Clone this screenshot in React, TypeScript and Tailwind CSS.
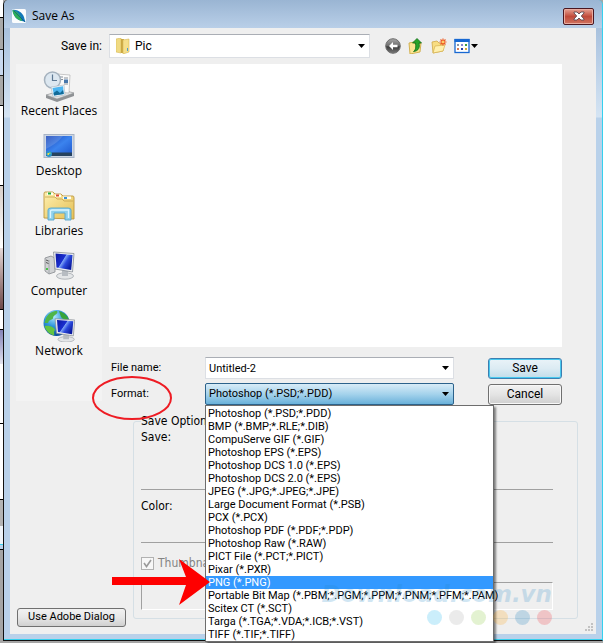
import React from 'react';

const formats = [
  'Photoshop (*.PSD;*.PDD)',
  'BMP (*.BMP;*.RLE;*.DIB)',
  'CompuServe GIF (*.GIF)',
  'Photoshop EPS (*.EPS)',
  'Photoshop DCS 1.0 (*.EPS)',
  'Photoshop DCS 2.0 (*.EPS)',
  'JPEG (*.JPG;*.JPEG;*.JPE)',
  'Large Document Format (*.PSB)',
  'PCX (*.PCX)',
  'Photoshop PDF (*.PDF;*.PDP)',
  'Photoshop Raw (*.RAW)',
  'PICT File (*.PCT;*.PICT)',
  'Pixar (*.PXR)',
  'PNG (*.PNG)',
  'Portable Bit Map (*.PBM;*.PGM;*.PPM;*.PNM;*.PFM;*.PAM)',
  'Scitex CT (*.SCT)',
  'Targa (*.TGA;*.VDA;*.ICB;*.VST)',
  'TIFF (*.TIF;*.TIFF)',
];

const Arrow = ({ className = '' }: { className?: string }) => (
  <svg viewBox="0 0 7 4" className={`pointer-events-none h-1 w-[7px] shrink-0 ${className}`}>
    <path d="M0 0H7L3.5 4Z" fill="#000" />
  </svg>
);

const Monitor = ({ id }: { id: string }) => (
  <g>
    <defs>
      <linearGradient id={id} x1="0" y1="0" x2="1" y2="0.6">
        <stop offset="0" stopColor="#0c16a0" />
        <stop offset="0.48" stopColor="#1a2fd0" />
        <stop offset="0.52" stopColor="#7ea4f5" />
        <stop offset="0.7" stopColor="#2b49dc" />
        <stop offset="1" stopColor="#0a1aa0" />
      </linearGradient>
    </defs>
    <ellipse cx="22" cy="26" rx="8.5" ry="3.2" fill="#e4e6e8" stroke="#9a9fa5" strokeWidth="0.7" />
    <path d="M19 20L25 21L25 26L19 26Z" fill="#b7bcc2" />
    <path d="M10.500 2L31 3.500L29.500 22L12 19Z" fill="#eceef0" stroke="#888e96" strokeWidth="0.8" />
    <path d="M12.500 3.600L29.500 5L28.200 20L13.500 17.500Z" fill={`url(#${id})`} />
  </g>
);

const RecentIcon = () => (
  <svg viewBox="0 0 32 32" className="size-8">
    <path d="M3 25L20 20L31 23L31 26L14 32L3 28Z" fill="#8f9295" />
    <path d="M3 25L20 20L31 23L14 29Z" fill="#e3e4e5" stroke="#909396" strokeWidth="0.6" />
    <path d="M14 4L27 5L26 23L14 22Z" fill="#fafafa" stroke="#a8a8a8" strokeWidth="0.6" />
    <path d="M16 7H20M16 9.500H20M21 8H25M21 14H25" stroke="#889099" />
    <path d="M21 9.500H25V13H21Z" fill="#4777ac" />
    <circle cx="9.500" cy="10" r="8" fill="#dce7f0" stroke="#a5b2be" strokeWidth="1.5" />
    <path d="M9.500 4.500V10.500H14" fill="none" stroke="#5d7893" strokeWidth="1.2" />
    <path d="M8 17L21 15L22 25L10 27Z" fill="#eef6fb" stroke="#a9b6bf" strokeWidth="0.6" />
    <path d="M9.500 18L20 16.300L20.800 24L11 25.500Z" fill="#4db5f0" />
    <path d="M10.500 23L14 20.500L17 23L20 20L20.800 24L11 25.500Z" fill="#126b98" />
  </svg>
);

const DesktopIcon = () => (
  <svg viewBox="0 0 32 32" className="size-8">
    <defs>
      <linearGradient id="desk" x1="0" y1="0" x2="1" y2="1">
        <stop offset="0" stopColor="#1a44b8" />
        <stop offset="0.5" stopColor="#3b83ee" />
        <stop offset="1" stopColor="#1c55cc" />
      </linearGradient>
    </defs>
    <rect x="1" y="4.500" width="30" height="23" fill="#ccd6e4" stroke="#a8b4c6" />
    <rect x="3" y="6" width="26" height="20" fill="url(#desk)" />
    <path d="M3 6H20C15 12 9 16 3 19Z" fill="#fff" opacity="0.15" />
    <rect x="3" y="22.500" width="26" height="3.500" fill="#26425f" />
    <circle cx="6" cy="24" r="3" fill="#2a96c9" />
    <path d="M4.500 23H6V25H4.500Z" fill="#e8d84b" />
    <path d="M6 22.500H7.500V24H6Z" fill="#8cd46c" />
  </svg>
);

const LibrariesIcon = () => (
  <svg viewBox="0 0 32 32" className="size-8">
    <defs>
      <linearGradient id="lib" x1="0" y1="0" x2="1" y2="1">
        <stop offset="0" stopColor="#fff0b0" />
        <stop offset="1" stopColor="#e3bf55" />
      </linearGradient>
    </defs>
    <path d="M1 28V4Q1 2 2 2H10L12 4H18L20 6H30Q31 6 31 8V29Z" fill="url(#lib)" stroke="#bd973e" strokeWidth="0.9" />
    <path d="M4 2.500H10V5H4Z M12 4.500H18V7H12Z M20 6.500H28V9H20Z" fill="#fffdf3" />
    <path d="M5 2.500H8V4.500H5Z" fill="#23a93d" />
    <path d="M13 4.500H16V6.500H13Z" fill="#d94932" />
    <path d="M21 7H24V9H21Z" fill="#3a91d8" />
    <path d="M2 7H12L14 9H19L21 11H30" fill="none" stroke="#c5a14e" strokeWidth="0.8" />
    <path d="M5 30V20Q5 18 8 18H25Q28 18 28 20V30H22V23H11V30Z" fill="#8fd1ec" stroke="#57a5cb" strokeWidth="0.9" />
    <path d="M7.500 28V21Q7.500 20 9 20H25.500V28" fill="none" stroke="#dcf5ff" strokeWidth="1.3" />
  </svg>
);

const ComputerIcon = () => (
  <svg viewBox="0 0 32 32" className="size-8">
    <path d="M2 8L8 6L12 8V22L6 24L2 21Z" fill="#d0d2d4" stroke="#85898e" strokeWidth="0.8" />
    <path d="M6 10V24" stroke="#9b9fa3" strokeWidth="0.8" />
    <path d="M3 10L5.500 11M3 12.500L5.500 13.500" stroke="#555" />
    <path d="M3 18H5V20H3Z" fill="#4cc14a" />
    <Monitor id="pc" />
  </svg>
);

const NetworkIcon = () => (
  <svg viewBox="0 0 32 32" className="size-8">
    <defs>
      <radialGradient id="globe" cx="0.4" cy="0.25" r="0.75">
        <stop offset="0" stopColor="#b4eaff" />
        <stop offset="0.5" stopColor="#2d94dc" />
        <stop offset="1" stopColor="#0b4c9a" />
      </radialGradient>
    </defs>
    <circle cx="13.500" cy="13" r="13" fill="url(#globe)" />
    <path d="M3 8C6 3 9 1 14 1C16 4 10 5 10 8C10 10 6 9 5 13L1.500 13Z" fill="#4fb548" />
    <path d="M16 1C22 3 25 6 26 11L21 10L18 7Z" fill="#38a53a" />
    <path d="M1.500 16C7 15 12 18 12 20C10 22 12 24 11 25.500C6 24 3 21 1.500 16Z" fill="#63c442" />
    <g transform="translate(2 7) scale(0.96 0.86)">
      <Monitor id="net" />
    </g>
  </svg>
);

const places = [
  { name: 'Recent Places', icon: <RecentIcon /> },
  { name: 'Desktop', icon: <DesktopIcon /> },
  { name: 'Libraries', icon: <LibrariesIcon /> },
  { name: 'Computer', icon: <ComputerIcon /> },
  { name: 'Network', icon: <NetworkIcon /> },
];

// Sliver of the application window behind the dialog
const BackgroundEdge = () => (
  <div className="flex w-[3px] shrink-0 flex-col bg-white">
    <div className="h-[18px] border-b border-black" />
    <div className="h-[31px] bg-[#a9a9a9]" />
    <div className="h-[27px] border-y border-[#222] bg-[#c9d9ef]" />
    <div className="h-[30px] border-b border-black bg-[#a9a9a9]" />
    <div className="h-20 border-b border-black" />
    <div className="h-[62px] bg-linear-to-b from-[#d8d0ca] to-white" />
    <div className="h-[62px] border-b border-black bg-linear-to-b from-[#e5dada] to-[#6e4a4a]" />
    <div className="h-5 border-b border-black" />
    <div className="h-[34px] bg-linear-to-b from-[#8583b8] to-[#e4e4ee]" />
    <div className="h-[60px] border-b border-black" />
    <div className="h-[76px] border-b border-black" />
    <div className="h-[26px] bg-[#b4b4b4]" />
    <div className="h-[18px] bg-[#eef3f8]" />
    <div className="h-[6px] border-y border-t-[#35d0ee] border-b-black bg-[#b9d1ea]" />
    <div className="flex-1 bg-[#a5a5a5]" />
  </div>
);

const TitleBar = () => (
  <header className="flex h-7 items-center rounded-t-[5px] bg-linear-to-b from-[#9ab5d3] to-[#b9cfe8] pt-1 pr-2 pl-2">
    <svg viewBox="0 0 14 14" className="size-[14px]">
      <rect width="14" height="14" rx="1.500" fill="#fafcfd" />
      <path d="M0.500 1C6 0 12 5 12.500 10L13.500 13L10 12C5 11 1 7 0.500 1Z" fill="#1278b8" />
      <path d="M0.500 1C5 2 9 6 10 12C5 11 1 7 0.500 1Z" fill="#2fae57" />
      <path d="M2 2L13 13" stroke="#084e86" strokeWidth="0.7" />
    </svg>
    <h1 className="ml-[6px] flex-1 font-['Open_Sans','Noto_Sans',sans-serif] text-[12px] leading-4">Save As</h1>
    <button
      aria-label="Close"
      className="flex h-[17px] w-[31px] items-center justify-center rounded-[2px] border border-[#4a1720] bg-linear-to-b from-[#e5a193] via-[#c04a3a] via-50% to-[#cf7361] shadow-[inset_0_0_0_1px_#e9aca0]"
    >
      <svg viewBox="0 0 12 10" className="h-[10px] w-3">
        <path
          d="M1 1H4L6 3L8 1H11V2L8.300 5L11 8V9H8L6 7L4 9H1V8L3.700 5L1 2Z"
          fill="#fff"
          stroke="#5b4a50"
          strokeWidth="0.9"
        />
      </svg>
    </button>
  </header>
);

const Toolbar = () => (
  <div className="flex h-9 items-center">
    <label htmlFor="folder" className="w-[99px] shrink-0 pr-[7px] text-right text-[12px]">
      Save in:
    </label>
    <div className="relative flex h-6 w-[261px] items-center border border-[#dcdfe4] border-t-[#aaaeb5] bg-white">
      <svg viewBox="0 0 14 16" className="pointer-events-none absolute left-[6px] h-4 w-[14px]">
        <path d="M0 1L5 0V15L0 14Z" fill="#f0da82" stroke="#d6b855" strokeWidth="0.6" />
        <path d="M5 1H8V15H5Z" fill="#caa742" />
        <path d="M7 2L13 1V14L7 16Z" fill="#f5df8b" stroke="#d6b855" strokeWidth="0.6" />
        <path d="M11 10H12V13H11Z" fill="#4d9ed0" />
      </svg>
      <select id="folder" className="h-full w-full appearance-none bg-transparent pl-[25px] text-[12px] outline-none">
        <option>Pic</option>
      </select>
      <Arrow className="absolute right-1" />
    </div>
    <div className="flex items-center gap-[7px] pl-[15px]">
      <button aria-label="Back">
        <svg viewBox="0 0 16 16" className="size-4">
          <defs>
            <linearGradient id="back" x1="0" y1="0" x2="0" y2="1">
              <stop offset="0" stopColor="#a8a8a8" />
              <stop offset="0.5" stopColor="#6b6b6b" />
              <stop offset="0.55" stopColor="#3c3c3c" />
              <stop offset="1" stopColor="#7a7a7a" />
            </linearGradient>
          </defs>
          <circle cx="8" cy="8" r="7.300" fill="url(#back)" stroke="#6e6e6e" />
          <path d="M8 4L4 8L8 12V9.300H12.500V6.700H8Z" fill="#fff" />
        </svg>
      </button>
      <button aria-label="Up one level">
        <svg viewBox="0 0 16 16" className="size-4">
          <path d="M1 5L6 4L7 6L13 5L12 14L2 16Z" fill="#fbe592" stroke="#ceaa45" strokeWidth="0.9" />
          <path
            d="M5.500 13.500C8 12 8 9 7.500 5H4.500L9 0.500L13.500 5H11C12 9 11 13 5.500 13.500Z"
            fill="#28a329"
            stroke="#126c18"
            strokeWidth="0.8"
          />
        </svg>
      </button>
      <button aria-label="New folder">
        <svg viewBox="0 0 16 16" className="size-4">
          <path d="M1 4L6 3L8 5L12 6V13L2 15Z" fill="#f8dd82" stroke="#cfa847" strokeWidth="0.8" />
          <path d="M2 15L4 8L14 7L12 13Z" fill="#fff0ae" stroke="#d6b24f" strokeWidth="0.7" />
          <path d="M12 0.500V7.500M8.500 4H15.500M9.500 1.500L14.500 6.500M14.500 1.500L9.500 6.500" stroke="#ed5b22" strokeWidth="1.2" />
          <circle cx="12" cy="4" r="1.300" fill="#ffcf66" />
        </svg>
      </button>
      <button aria-label="View menu" className="flex items-center gap-[1px]">
        <svg viewBox="0 0 16 16" className="size-4">
          <rect x="1" y="1.500" width="14" height="13" fill="#fff" stroke="#1768d2" strokeWidth="1.3" />
          <path d="M0.500 1H15.500V4H0.500Z" fill="#1768d2" />
          <path d="M3 6H5V8H3Z" fill="#8a94a8" />
          <path d="M7 6H9V8H7Z" fill="#8a86d0" />
          <path d="M3 10H5V12H3Z" fill="#d77a55" />
          <path d="M11 6H13V8H11Z" fill="#3c9d42" />
          <path d="M7 10H9V12H7Z" fill="#283fa8" />
          <path d="M11 10H13V12H11Z" fill="#d7aa34" />
        </svg>
        <Arrow />
      </button>
    </div>
  </div>
);

const FormatList = () => (
  <ul
    role="listbox"
    aria-label="Format"
    className="absolute top-full left-0 z-10 w-[289px] border border-[#6d6d6d] bg-white pt-px shadow-[2px_2px_2px_#0007]"
  >
    {formats.map((format) => (
      <li
        key={format}
        role="option"
        aria-selected={format.startsWith('PNG')}
        className={`h-[13px] pl-[2px] text-[11px] leading-[13px] whitespace-nowrap ${
          format.startsWith('PNG') ? 'bg-[#3399ff] text-white' : ''
        }`}
      >
        {format}
      </li>
    ))}
  </ul>
);

const Fields = () => (
  <form className="mt-[10px] mr-[34px] flex flex-col gap-1">
    <div className="flex items-center">
      <label htmlFor="filename" className="w-24 shrink-0 pl-[2px] text-[11px]">
        File name:
      </label>
      <div className="relative flex h-[22px] w-[249px] items-center">
        <input
          id="filename"
          defaultValue="Untitled-2"
          className="h-full w-full border border-[#dcdfe4] border-t-[#aaaeb5] bg-white pl-[3px] text-[11px] outline-none"
        />
        <Arrow className="absolute right-[5px]" />
      </div>
      <button
        type="button"
        className="ml-auto h-[21px] w-[74px] rounded-[3px] border border-[#3c7fb1] bg-linear-to-b from-[#eaf3f8] via-[#dcebf3] via-50% to-[#c1dce9] text-[12px] shadow-[inset_0_0_0_1px_#48c8ef]"
      >
        Save
      </button>
    </div>
    <div className="flex items-center">
      <label htmlFor="format" className="w-24 shrink-0 pl-[2px] text-[11px]">
        Format:
      </label>
      <div className="relative flex h-[22px] w-[249px] items-center">
        <select
          id="format"
          className="h-full w-full appearance-none rounded-[2px] border border-[#2c628b] bg-linear-to-b from-[#d8ecf7] via-[#a5d3ec] via-50% to-[#69b1da] pl-[3px] text-[11px] outline-none"
        >
          {formats.map((format) => (
            <option key={format}>{format}</option>
          ))}
        </select>
        <Arrow className="absolute right-[5px]" />
        <FormatList />
      </div>
      <button
        type="button"
        className="ml-auto h-[21px] w-[74px] rounded-[3px] border border-[#707070] bg-linear-to-b from-[#f2f2f2] via-[#e4e4e4] via-50% to-[#cfcfcf] text-[12px] shadow-[inset_0_0_0_1px_#f8f8f8]"
      >
        Cancel
      </button>
    </div>
  </form>
);

const Watermark = () => (
  <div className="pointer-events-none absolute right-[50px] bottom-[15px] z-20 opacity-20">
    <p className="text-right font-['DejaVu_Sans',sans-serif] text-[23px] leading-6 font-bold text-[#2187c7] italic">
      Download.com.vn
    </p>
    <div className="mt-1 flex justify-end gap-[7px]">
      <span className="size-[15px] rounded-full bg-[#00aeef]" />
      <span className="size-[15px] rounded-full bg-[#a0a0a0]" />
      <span className="size-[15px] rounded-full bg-[#7ac21e]" />
      <span className="size-[15px] rounded-full bg-[#ff9c00]" />
      <span className="size-[15px] rounded-full bg-[#0071b8]" />
      <span className="size-[15px] rounded-full bg-[#f01e28]" />
    </div>
  </div>
);

export default function App() {
  return (
    <main className="flex bg-[#a5a5a5] font-['Roboto','Liberation_Sans',sans-serif] text-black">
      <BackgroundEdge />
      <div className="relative mb-[2px] min-w-0 flex-1 rounded-t-[5px] border-r border-b border-l border-r-[#35d0ee] border-b-[#111] border-l-[#111] bg-[linear-gradient(#9ab5d3,#b3cae4_50px,#d5e4f3_117px,#b9d1ea_118px)]">
        <TitleBar />
        <div className="mr-[6px] ml-[6px] bg-[#efefef]">
          <Toolbar />
          <div className="flex">
            <nav className="mr-[7px] mb-1 ml-[6px] flex w-[86px] shrink-0 flex-col bg-[#f3f3f3] pt-[6px]">
              {places.map((place) => (
                <button
                  key={place.name}
                  className="flex h-[60px] flex-col items-center gap-px font-['Open_Sans','Noto_Sans',sans-serif] text-[12px] leading-4 whitespace-nowrap"
                >
                  {place.icon}
                  {place.name}
                </button>
              ))}
            </nav>
            <div className="min-w-0 flex-1">
              <div className="mr-[34px] h-[283px] bg-white" />
              <Fields />
            </div>
          </div>
          <div className="relative flex items-end pt-2 pb-[7px] pl-[7px]">
            <button className="h-[19px] w-[109px] shrink-0 rounded-[3px] border border-[#707070] bg-linear-to-b from-[#f2f2f2] via-[#e6e6e6] via-50% to-[#d0d0d0] text-[11px]">
              Use Adobe Dialog
            </button>
            <fieldset className="mr-[18px] mb-2 ml-[7px] h-[206px] min-w-0 flex-1 rounded-[3px] border border-[#d5dfe5] pr-6 pl-[7px] font-['DejaVu_Sans_Condensed','DejaVu_Sans',sans-serif] text-[12px] leading-4">
              <legend>Save Options</legend>
              <p className="h-[61px] border-b border-[#a0a0a0]">Save:</p>
              <p className="h-[53px] border-b border-[#a0a0a0] pt-2">Color:</p>
              <label className="mt-3 flex items-center gap-1 text-[#838383]">
                <span className="relative flex size-[13px]">
                  <input
                    type="checkbox"
                    defaultChecked
                    disabled
                    className="size-[13px] appearance-none border border-[#b1b1b1] bg-[#f7f7f7]"
                  />
                  <svg viewBox="0 0 13 13" className="absolute size-[13px]">
                    <path d="M3 6L5.500 9.500L10 3" fill="none" stroke="#9a9a9a" strokeWidth="1.6" />
                  </svg>
                </span>
                Thumbnail
              </label>
              <div className="mt-[11px] h-7 border border-[#fff] border-t-[#a0a0a0] border-l-[#a0a0a0]" />
            </fieldset>
            {/* Resize grip */}
            <svg viewBox="0 0 9 9" className="absolute right-[2px] bottom-[2px] size-[9px]">
              <path
                d="M6 0H8V2H6Z M3 3H5V5H3Z M6 3H8V5H6Z M0 6H2V8H0Z M3 6H5V8H3Z M6 6H8V8H6Z"
                fill="#c2c2c2"
              />
            </svg>
          </div>
        </div>
        <div className="h-[6px] border-b border-[#35d0ee]" />
        <Watermark />
        {/* Callouts: ring around the format label and arrow to the PNG entry */}
        <svg viewBox="0 0 82 46" className="pointer-events-none absolute top-[375px] left-[87px] h-[46px] w-[82px]">
          <ellipse cx="41" cy="23" rx="39" ry="21" fill="none" stroke="#ee1c24" strokeWidth="2" />
        </svg>
        <svg viewBox="0 0 98 46" className="pointer-events-none absolute top-[559px] left-[108px] z-20 h-[46px] w-[98px]">
          <path d="M0 18H74L67 0L98 23L67 46L74 26H0Z" fill="#fe0000" />
        </svg>
      </div>
    </main>
  );
}
